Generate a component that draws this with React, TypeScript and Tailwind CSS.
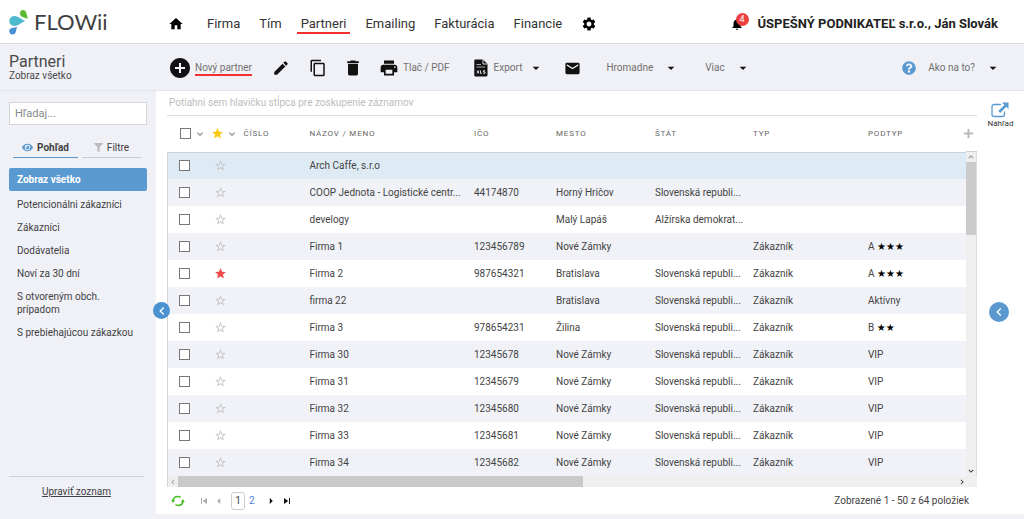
import type { ReactNode } from 'react'
import { FaEye, FaFilter, FaPlus, FaQuestionCircle } from 'react-icons/fa'
import {
  MdAddCircle,
  MdArrowDropDown,
  MdArrowLeft,
  MdArrowRight,
  MdContentCopy,
  MdDelete,
  MdEdit,
  MdEmail,
  MdHome,
  MdKeyboardArrowDown,
  MdKeyboardArrowLeft,
  MdKeyboardArrowRight,
  MdKeyboardArrowUp,
  MdLocalPrintshop,
  MdNotifications,
  MdSettings,
  MdSkipNext,
  MdSkipPrevious,
  MdStar,
  MdStarBorder,
} from 'react-icons/md'

interface Partner {
  name: string
  ico?: string
  city?: string
  country?: string
  type?: string
  subtype?: string
  stars?: string
  starred?: boolean
}

// long values are already shortened for the list view
const SK = 'Slovenská republi...'

const partners: Partner[] = [
  { name: 'Arch Caffe, s.r.o' },
  { name: 'COOP Jednota - Logistické centr...', ico: '44174870', city: 'Horný Hričov', country: SK },
  { name: 'develogy', city: 'Malý Lapáš', country: 'Alžírska demokrat...' },
  { name: 'Firma 1', ico: '123456789', city: 'Nové Zámky', type: 'Zákazník', subtype: 'A', stars: '★★★' },
  { name: 'Firma 2', ico: '987654321', city: 'Bratislava', country: SK, type: 'Zákazník', subtype: 'A', stars: '★★★', starred: true },
  { name: 'firma 22', city: 'Bratislava', country: SK, type: 'Zákazník', subtype: 'Aktívny' },
  { name: 'Firma 3', ico: '978654231', city: 'Žilina', country: SK, type: 'Zákazník', subtype: 'B', stars: '★★' },
  { name: 'Firma 30', ico: '12345678', city: 'Nové Zámky', country: SK, type: 'Zákazník', subtype: 'VIP' },
  { name: 'Firma 31', ico: '12345679', city: 'Nové Zámky', country: SK, type: 'Zákazník', subtype: 'VIP' },
  { name: 'Firma 32', ico: '12345680', city: 'Nové Zámky', country: SK, type: 'Zákazník', subtype: 'VIP' },
  { name: 'Firma 33', ico: '12345681', city: 'Nové Zámky', country: SK, type: 'Zákazník', subtype: 'VIP' },
  { name: 'Firma 34', ico: '12345682', city: 'Nové Zámky', country: SK, type: 'Zákazník', subtype: 'VIP' },
]

const navItems = ['Firma', 'Tím', 'Partneri', 'Emailing', 'Fakturácia', 'Financie']

const views = [
  'Potencionálni zákazníci',
  'Zákazníci',
  'Dodávatelia',
  'Noví za 30 dní',
  'S otvoreným obch. prípadom',
  'S prebiehajúcou zákazkou',
]

function Logo() {
  return (
    <a href="#" className="flex items-center" aria-label="FLOWii">
      <svg viewBox="0 0 20 26" className="h-[26px] w-5" aria-hidden="true">
        <path d="M19 9.500C15.500 8.600 11 8.200 11 4.200C11 2 12.600 0.800 14.300 1C17.800 1.400 17.500 6 19 9.500Z" fill="#5cba32" />
        <path d="M16.500 12C12.500 12.900 10 17 5.400 17C2.400 17 0.300 14.900 0.300 12.100C0.300 9.200 2.500 7 5.400 7C10 7 12.500 11.100 16.500 12Z" fill="#4fb9cf" />
        <path d="M8.200 17.700C6.900 19.900 7.600 25.500 3.600 25.500C1.500 25.500 0.200 24 0.200 22.100C0.200 18.300 5 19.100 8.200 17.700Z" fill="#4a8fd6" />
      </svg>
      <span className="pl-[5px] font-['Lato',sans-serif] text-[22px] leading-[26px] text-[#3f3f41]">FLOWii</span>
    </a>
  )
}

function ExcelIcon() {
  return (
    <svg viewBox="0 0 14 18" className="h-[18px] w-3.5" aria-hidden="true">
      <path d="M1.500 0.500H9L13.500 5V16A1.500 1.500 0 0 1 12 17.500H1.500A1.200 1.200 0 0 1 0.300 16.300V1.700A1.200 1.200 0 0 1 1.500 0.500Z" fill="#111" />
      <path d="M9 0.500V5H13.500" fill="none" stroke="#f0f1f6" strokeWidth="0.900" />
      <path d="M2.500 5.500H7M2.500 8H11" stroke="#f0f1f6" strokeWidth="0.700" />
      <path d="M3 11.500L5 14.500M5 11.500L3 14.500M6.500 11.500V14.300H8M11 11.700H9.400V12.900H11V14.300H9.200" fill="none" stroke="#f0f1f6" strokeWidth="0.900" />
    </svg>
  )
}

function PreviewIcon() {
  return (
    <svg viewBox="0 0 18 16" className="h-4 w-[18px]" aria-hidden="true">
      <path d="M10 2.500H3A2 2 0 0 0 1 4.500V12.500A2 2 0 0 0 3 14.500H11.500A2 2 0 0 0 13.500 12.500V9.500" fill="none" stroke="#5b9ad1" strokeWidth="1.300" />
      <path d="M11 0.500H17.500V7L15.300 4.800L9.200 10.900L7.300 9L13.400 2.900Z" fill="#5b9ad1" />
    </svg>
  )
}

function RefreshIcon() {
  return (
    <svg viewBox="0 0 14 12" className="h-3 w-3.5" aria-hidden="true">
      <g fill="none" stroke="#45bf22" strokeWidth="1.500">
        <path d="M2 5.500C2.500 3 4.500 1.600 6.800 1.600C8 1.600 8.800 1.900 9.600 2.500" />
        <path d="M12 6.500C11.500 9 9.500 10.400 7.200 10.400C6 10.400 5.200 10.100 4.400 9.500" />
      </g>
      <path d="M9.800 7H13.800L12 4ZM4.200 5H0.200L2 8Z" fill="#45bf22" />
    </svg>
  )
}

function ToolButton({ icon, label, className = '' }: { icon: ReactNode; label: string; className?: string }) {
  return (
    <button type="button" aria-label={label} title={label} className={`flex shrink-0 items-center text-[#111] ${className}`}>
      {icon}
    </button>
  )
}

function TopBar() {
  return (
    <header className="flex h-11 items-center border-b border-[#d9dbdb] bg-white pr-[26px]">
      <div className="w-[168px] shrink-0 pl-[9px]">
        <Logo />
      </div>
      <nav className="flex items-center gap-[11px] pt-1 text-[13px] leading-4 text-[#333]">
        <a href="#" aria-label="Domov" className="mr-2 text-black">
          <MdHome className="size-4" />
        </a>
        {navItems.map((item) => (
          <a
            key={item}
            href="#"
            className={item === 'Partneri' ? 'border-b-2 border-[#f2302f] px-1 pt-0.5' : 'border-b-2 border-transparent px-1 pt-0.5'}
          >
            {item}
          </a>
        ))}
        <a href="#" aria-label="Nastavenia" className="ml-1 text-black">
          <MdSettings className="size-4" />
        </a>
      </nav>
      <div className="ml-auto flex items-center pt-1">
        <button type="button" aria-label="Notifikácie" className="relative mr-3.5 text-black">
          <MdNotifications className="size-[14px]" />
          <span className="absolute -top-1 left-1.5 flex size-[13px] items-center justify-center rounded-full bg-[#ee4040] text-[9px] leading-3 text-white">
            4
          </span>
        </button>
        <span className="text-[13px] leading-4 font-bold text-[#222]">ÚSPEŠNÝ PODNIKATEĽ s.r.o., Ján Slovák</span>
      </div>
    </header>
  )
}

function Toolbar() {
  return (
    <div className="flex h-[47px] items-center border-b border-[#e4e5ea] bg-[#f0f1f6] pt-0.5 text-[10px] leading-3 text-[#707070]">
      <div className="w-[168px] shrink-0 pl-[9px] text-[#4a4a4a]">
        <h1 className="text-[16px] leading-4">Partneri</h1>
        <p>Zobraz všetko</p>
      </div>
      <button type="button" className="flex shrink-0 items-center gap-[3px]">
        <MdAddCircle className="size-6 text-[#111]" />
        <span className="border-b-2 border-[#f2302f] pt-0.5">Nový partner</span>
      </button>
      <ToolButton label="Upraviť" icon={<MdEdit className="size-[18px]" />} className="ml-5" />
      <ToolButton label="Kopírovať" icon={<MdContentCopy className="size-[18px]" />} className="ml-[19px]" />
      <ToolButton label="Vymazať" icon={<MdDelete className="size-5" />} className="ml-4" />
      <button type="button" className="ml-4 flex shrink-0 items-center gap-1">
        <MdLocalPrintshop className="size-5 text-[#111]" />
        Tlač / PDF
      </button>
      <button type="button" className="ml-6 flex shrink-0 items-center">
        <ExcelIcon />
        <span className="pl-1.5">Export</span>
        <MdArrowDropDown className="ml-1.5 size-4 text-[#111]" />
      </button>
      <ToolButton label="Poslať e-mail" icon={<MdEmail className="size-[17px]" />} className="ml-5" />
      <button type="button" className="ml-[25px] flex shrink-0 items-center gap-2.5">
        Hromadne
        <MdArrowDropDown className="size-4 text-[#111]" />
      </button>
      <button type="button" className="ml-[26px] flex shrink-0 items-center gap-2.5">
        Viac
        <MdArrowDropDown className="size-4 text-[#111]" />
      </button>
      <button type="button" className="mr-[23px] ml-auto flex shrink-0 items-center">
        <FaQuestionCircle className="mr-3 size-[14px] text-[#5b9ad1]" />
        Ako na to?
        <MdArrowDropDown className="ml-2.5 size-4 text-[#111]" />
      </button>
    </div>
  )
}

function Sidebar() {
  return (
    <aside className="relative flex w-[156px] shrink-0 flex-col px-[9px] pt-[11px] pb-[21px] text-[10px] leading-[13px] text-[#3f4145]">
      <input
        type="search"
        aria-label="Hľadaj"
        placeholder="Hľadaj..."
        className="h-[23px] w-full border border-[#d5d6da] bg-white px-[5px] text-[11px] text-[#333] placeholder:text-[#888]"
      />
      <div className="mt-3 flex gap-1 px-1">
        <button type="button" className="flex h-[21px] w-[65px] items-center justify-center gap-1 border-b border-[#5b9ad1] font-bold">
          <FaEye className="size-[11px] text-[#5b9ad1]" />
          Pohľad
        </button>
        <button type="button" className="flex h-[21px] w-[59px] items-center justify-center gap-1 border-b border-[#c9cbd0]">
          <FaFilter className="size-[9px] text-[#bbb]" />
          Filtre
        </button>
      </div>
      <nav className="mt-2.5 flex flex-col">
        <a href="#" className="mb-0.5 rounded-xs bg-[#5b9ad1] px-2 py-[5px] font-bold text-white">
          Zobraz všetko
        </a>
        {views.map((view) => (
          <a key={view} href="#" className="px-2 py-[5px]">
            {view}
          </a>
        ))}
      </nav>
      <div className="mt-auto mr-[3px] border-t border-[#d0d1d6] pt-2 text-center">
        <a href="#" className="underline">
          Upraviť zoznam
        </a>
      </div>
      <button
        type="button"
        aria-label="Skryť panel"
        className="absolute top-[211px] -right-3.5 z-10 flex size-[17px] items-center justify-center rounded-full bg-[#4a92d0] text-white"
      >
        <MdKeyboardArrowLeft className="size-4" />
      </button>
    </aside>
  )
}

const checkboxClass = 'block size-[11px] appearance-none border border-[#777] bg-white'

function PartnerRow({ partner, index }: { partner: Partner; index: number }) {
  const bg = index === 0 ? 'bg-[#deebf5]' : index % 2 === 1 ? 'bg-[#f0f2f7]' : 'bg-white'

  return (
    <tr className={`h-[27px] ${bg}`}>
      <td className="border-l border-[#d5d5d5] pl-[11px]">
        <input type="checkbox" aria-label={`Vybrať ${partner.name}`} className={checkboxClass} />
      </td>
      <td className="pl-1.5">
        <button type="button" aria-label="Obľúbený" className="block">
          {partner.starred ? (
            <MdStar className="size-[13px] text-[#f04a4a]" />
          ) : (
            <MdStarBorder className="size-[13px] text-[#c4c4c4]" />
          )}
        </button>
      </td>
      <td className="pl-1.5" />
      <td className="truncate pl-1.5">{partner.name}</td>
      <td className="truncate pl-1.5">{partner.ico}</td>
      <td className="truncate pl-1.5">{partner.city}</td>
      <td className="truncate pl-1.5">{partner.country}</td>
      <td className="truncate pl-1.5">{partner.type}</td>
      <td className="truncate pl-1.5">
        {partner.subtype}
        {partner.stars && (
          <>
            {' '}
            <span className="font-['DejaVu_Sans',sans-serif] text-black">{partner.stars}</span>
          </>
        )}
      </td>
    </tr>
  )
}

function PartnerTable() {
  return (
    <div>
      <div className="flex">
        <div className="min-w-0 flex-1">
          <table className="w-full table-fixed text-left text-[10px] leading-[13px] text-[#444]">
            <colgroup>
              <col className="w-10" />
              <col className="w-[30px]" />
              <col className="w-[66px]" />
              <col />
              <col className="w-[82px]" />
              <col className="w-[99px]" />
              <col className="w-[98px]" />
              <col className="w-[115px]" />
              <col className="w-[104px]" />
            </colgroup>
            <thead>
              <tr className="h-9 border-b border-[#cfd2d4] text-[8px] tracking-widest text-[#666] uppercase">
                <th className="pl-3">
                  <span className="flex items-center">
                    <input type="checkbox" aria-label="Vybrať všetko" className={checkboxClass} />
                    <MdKeyboardArrowDown className="ml-[3px] size-3 text-[#888]" />
                  </span>
                </th>
                <th className="pl-[3px]">
                  <span className="flex items-center">
                    <MdStar className="size-[13px] shrink-0 text-[#fbcb09]" />
                    <MdKeyboardArrowDown className="ml-0.5 size-3 shrink-0 text-[#888]" />
                  </span>
                </th>
                <th className="pl-1.5 font-normal">Číslo</th>
                <th className="pl-1.5 font-normal">Názov / Meno</th>
                <th className="pl-1.5 font-normal">IČO</th>
                <th className="pl-1.5 font-normal">Mesto</th>
                <th className="pl-1.5 font-normal">Štát</th>
                <th className="pl-1.5 font-normal">Typ</th>
                <th className="pl-1.5 font-normal">Podtyp</th>
              </tr>
            </thead>
            <tbody>
              {partners.map((partner, i) => (
                <PartnerRow key={partner.name} partner={partner} index={i} />
              ))}
            </tbody>
          </table>
        </div>
        <div className="flex w-[11px] shrink-0 flex-col">
          <div className="flex h-9 items-center justify-end border-b border-[#cfd2d4] pr-[3px]">
            <button type="button" aria-label="Pridať stĺpec" className="shrink-0">
              <FaPlus className="size-[11px] text-[#bbb]" />
            </button>
          </div>
          <div className="flex flex-1 flex-col items-center border-r border-[#ddd] bg-[#efefef]">
            <MdKeyboardArrowUp className="size-2.5 text-[#888]" />
            <div className="h-[73px] w-full bg-[#cbcbcb]" />
            <MdKeyboardArrowDown className="mt-auto size-2.5 text-[#333]" />
          </div>
        </div>
      </div>
      <div className="flex h-[11px] items-center border-l border-[#d5d5d5] bg-[#efefef] pr-2.5">
        <MdKeyboardArrowLeft className="size-2.5 text-[#999]" />
        <div className="flex h-full flex-1">
          <div className="h-full w-[52%] bg-[#c9c9c9]" />
        </div>
        <MdKeyboardArrowRight className="size-2.5 text-[#333]" />
      </div>
    </div>
  )
}

function Pager() {
  return (
    <footer className="flex h-[27px] items-center pr-2 pl-1 text-[10px] leading-3 text-[#444]">
      <button type="button" aria-label="Obnoviť">
        <RefreshIcon />
      </button>
      <div className="ml-[13px] flex items-center text-[#111]">
        <button type="button" aria-label="Prvá strana" disabled className="text-[#aaa]">
          <MdSkipPrevious className="size-3" />
        </button>
        <button type="button" aria-label="Predchádzajúca strana" disabled className="ml-0.5 text-[#aaa]">
          <MdArrowLeft className="size-3.5" />
        </button>
        <button type="button" className="ml-[5px] h-[18px] w-3.5 rounded-[3px] border border-[#ccc] text-[#444]">
          1
        </button>
        <a href="#" className="ml-1 text-[#4a86e0]">
          2
        </a>
        <button type="button" aria-label="Ďalšia strana" className="ml-[9px]">
          <MdArrowRight className="size-3.5" />
        </button>
        <button type="button" aria-label="Posledná strana" className="ml-[3px]">
          <MdSkipNext className="size-3" />
        </button>
      </div>
      <p className="ml-auto">Zobrazené 1 - 50 z 64 položiek</p>
    </footer>
  )
}

export default function App() {
  return (
    <div className="flex min-h-screen flex-col bg-[#f0f1f6] font-['Roboto',sans-serif]">
      <TopBar />
      <Toolbar />
      <div className="flex flex-1">
        <Sidebar />
        <main className="mb-[5px] flex min-w-0 flex-1 bg-white pl-[11px]">
          <section className="min-w-0 flex-1">
            <p className="h-[25px] border-b border-[#dcdcdc] px-0.5 pt-[5px] text-[10px] leading-[13px] text-[#bdbdbd]">
              Potiahni sem hlavičku stĺpca pre zoskupenie záznamov
            </p>
            <PartnerTable />
            <Pager />
          </section>
          <aside className="flex w-[47px] shrink-0 flex-col items-center pt-[11px] pb-5 text-[8px] leading-3 text-[#333]">
            <button type="button" className="flex flex-col items-center">
              <PreviewIcon />
              Náhľad
            </button>
            <button
              type="button"
              aria-label="Zobraziť náhľad"
              className="my-auto mr-1 flex size-5 items-center justify-center rounded-full bg-[#5b9ad1] text-white"
            >
              <MdKeyboardArrowLeft className="size-4" />
            </button>
          </aside>
        </main>
      </div>
    </div>
  )
}
